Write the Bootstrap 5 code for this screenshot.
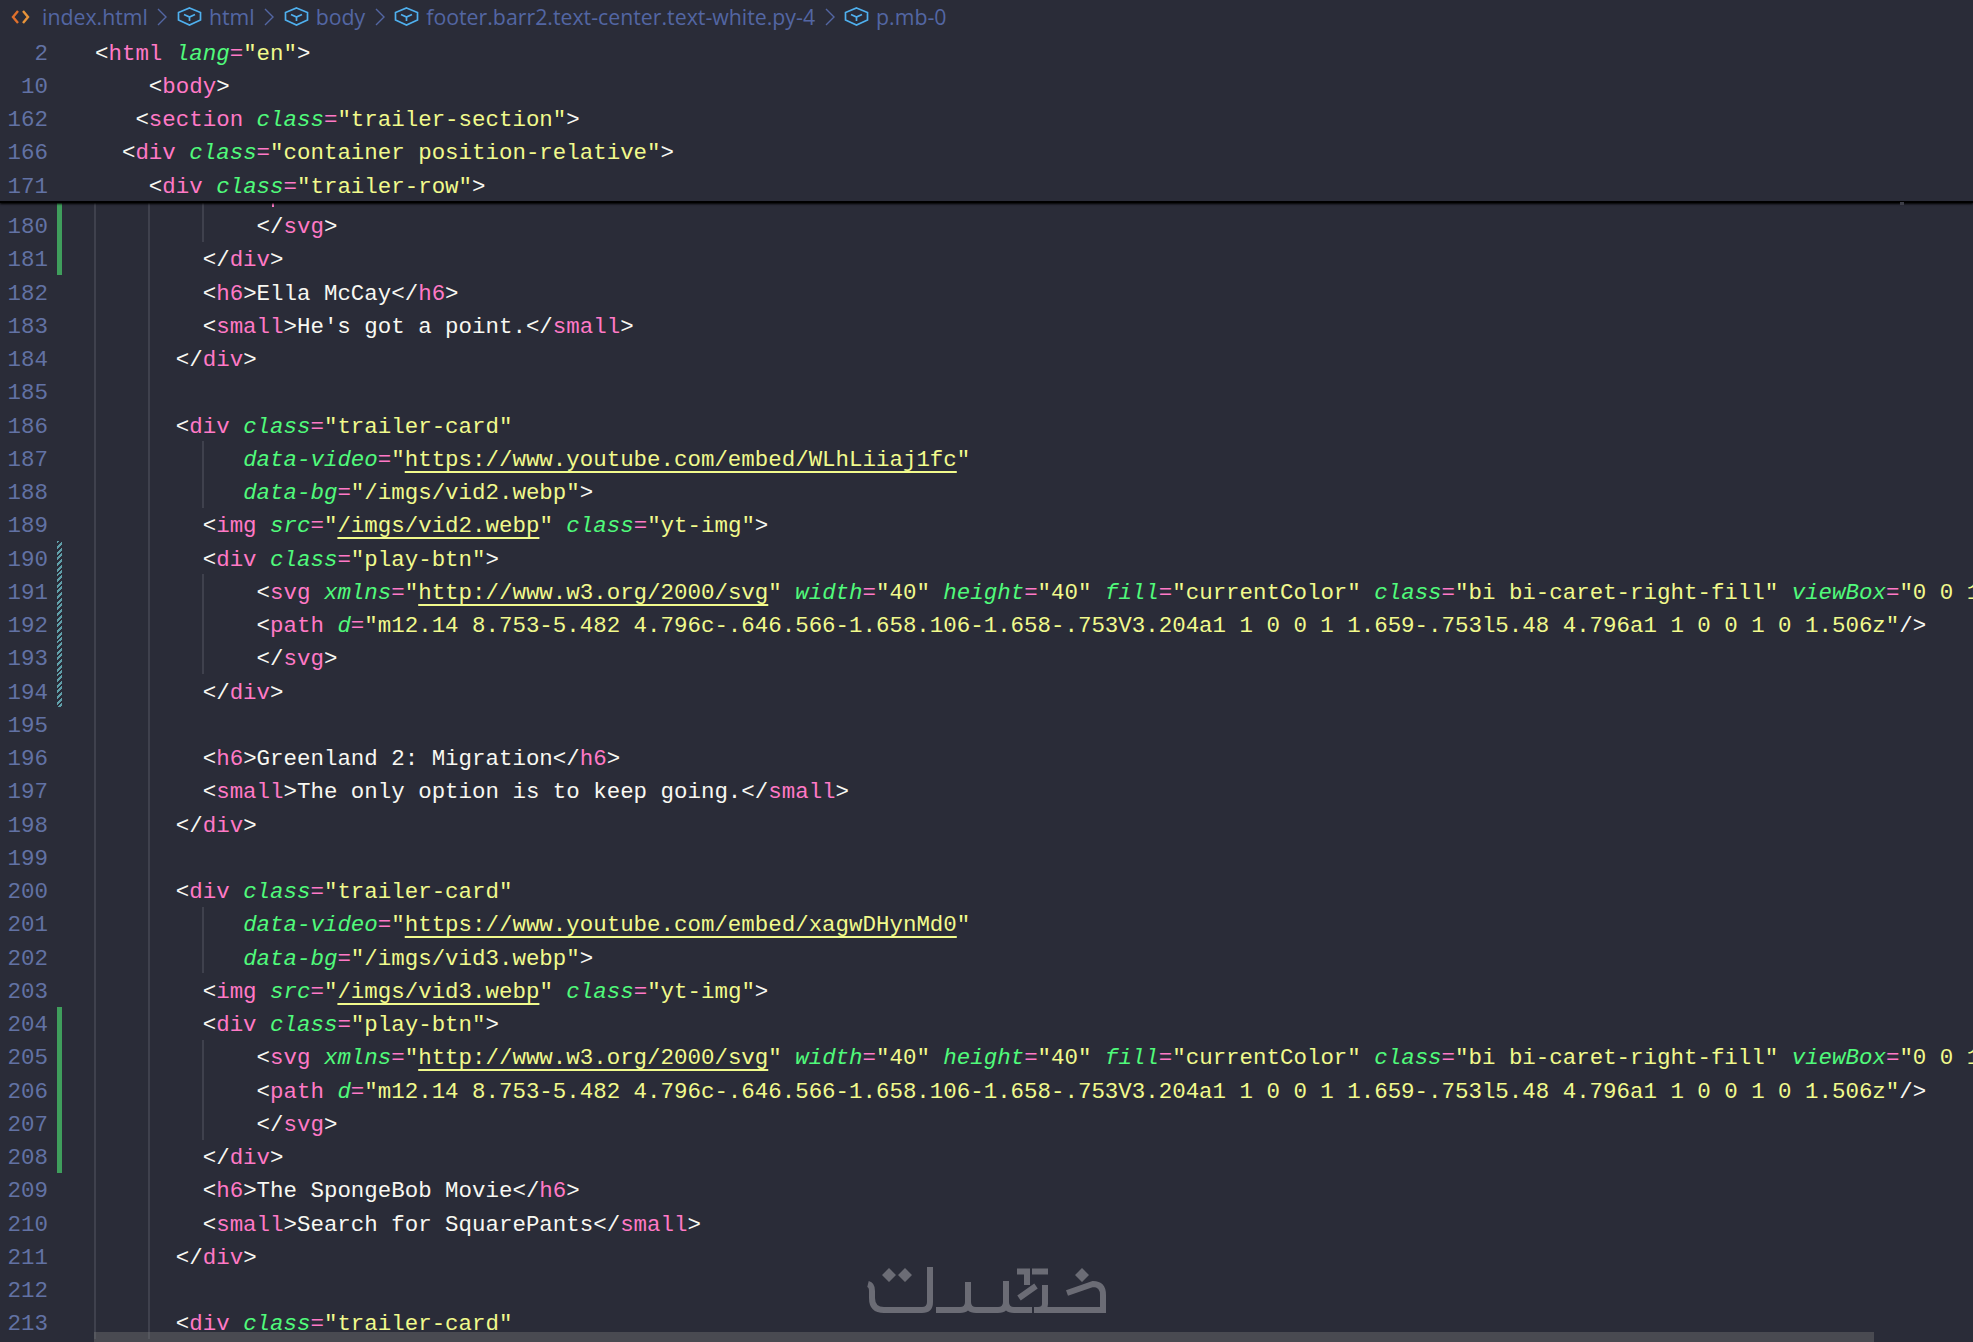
<!doctype html>
<html lang="en">
<head>
<meta charset="utf-8">
<title>index.html</title>
<link href="https://cdn.jsdelivr.net/npm/bootstrap@5.3.0/dist/css/bootstrap.min.css" rel="stylesheet">
<style>
html,body{height:100%;overflow:hidden;background:#2a2c38}
.ide{height:1342px;overflow:hidden;position:relative;background:#2a2c38}
.crumbs{height:35px;padding:0 0 2px 11px;font:21.3px "Open Sans",sans-serif;color:#5366a3;white-space:nowrap}
.crumbs svg{flex:none}
.fileic{margin-right:12px}
.sep{margin:0 9.5px}
.hex{margin-right:7px}
.ln{height:33.25px;font:22.44px/33.25px "Liberation Mono",monospace;white-space:pre;color:#f8f8f2;position:relative}
.num{width:48px;flex:none;text-align:right;color:#6272a4;padding-top:2.5px}
.gutter{width:46px;flex:none;position:relative}
.gutter i{position:absolute;left:9px;top:0;bottom:0;width:5px}
.add{background:#3f9e5c}
.mod{background:repeating-linear-gradient(135deg,#5f9ea8 0 2px,#2a2c38 2px 4px)}
.src{position:relative;padding:2.5px 0 0 1px}
.guide{position:absolute;top:0;bottom:0;width:1.5px;background:#3f414d}
.g1{left:0}.g2{left:54px}.g3{left:108px}
.tick{position:absolute;left:178px;bottom:2px;width:2px;height:4px;background:#ff79c6}
.tg{color:#ff79c6}.at{color:#50fa7b;font-style:italic}.st{color:#f1fa8c}
.ul{color:#f1fa8c;text-decoration:underline;text-underline-offset:5px;text-decoration-thickness:2px}
.sticky-lines{position:relative;z-index:2;background:#2a2c38;box-shadow:0 2px 0 #000,0 3px 2px #000;height:166px}
.speck{position:absolute;left:1900px;top:167px;width:4px;height:3px;background:#3c3d47}
.body-lines{margin-top:-25.75px}
.wm{position:absolute;left:860px;top:1260px;z-index:3}
.bar{position:absolute;left:94px;right:99px;bottom:0;height:10px;background:rgba(121,121,121,.4);z-index:4}
</style>
</head>
<body>
<div class="ide">
<div class="crumbs d-flex align-items-center">
<svg class="fileic" width="19" height="18" viewBox="0 0 19 18" fill="none" stroke-width="2.4"><path d="M7 3 2 9l5 6" stroke="#e0702c"/><path d="M12 3l5 6-5 6" stroke="#e8943a"/></svg>
<span>index.html</span>
<svg class="sep" width="10" height="18" viewBox="0 0 10 18" fill="none" stroke="#5366a3" stroke-width="1.4"><path d="M1 1l8 8-8 8"/></svg>
<svg class="hex" width="25" height="19" viewBox="0 0 25 19" fill="none" stroke="#4fb0ee" stroke-width="1.7"><path d="M12.500 1l11 4.500V13l-11 5-11-5V5.500z"/><path d="M7 7.500l5.500 2.500L18 7.500M12.500 10v4"/></svg>
<span>html</span>
<svg class="sep" width="10" height="18" viewBox="0 0 10 18" fill="none" stroke="#5366a3" stroke-width="1.4"><path d="M1 1l8 8-8 8"/></svg>
<svg class="hex" width="25" height="19" viewBox="0 0 25 19" fill="none" stroke="#4fb0ee" stroke-width="1.7"><path d="M12.500 1l11 4.500V13l-11 5-11-5V5.500z"/><path d="M7 7.500l5.500 2.500L18 7.500M12.500 10v4"/></svg>
<span>body</span>
<svg class="sep" width="10" height="18" viewBox="0 0 10 18" fill="none" stroke="#5366a3" stroke-width="1.4"><path d="M1 1l8 8-8 8"/></svg>
<svg class="hex" width="25" height="19" viewBox="0 0 25 19" fill="none" stroke="#4fb0ee" stroke-width="1.7"><path d="M12.500 1l11 4.500V13l-11 5-11-5V5.500z"/><path d="M7 7.500l5.500 2.500L18 7.500M12.500 10v4"/></svg>
<span>footer.barr2.text-center.text-white.py-4</span>
<svg class="sep" width="10" height="18" viewBox="0 0 10 18" fill="none" stroke="#5366a3" stroke-width="1.4"><path d="M1 1l8 8-8 8"/></svg>
<svg class="hex" width="25" height="19" viewBox="0 0 25 19" fill="none" stroke="#4fb0ee" stroke-width="1.7"><path d="M12.500 1l11 4.500V13l-11 5-11-5V5.500z"/><path d="M7 7.500l5.500 2.500L18 7.500M12.500 10v4"/></svg>
<span>p.mb-0</span>
</div>
<div class="sticky-lines" id="st"><div class="speck"></div></div>
<div class="body-lines" id="bd"></div>
<svg class="wm" width="250" height="60" viewBox="0 0 250 60" fill="none" stroke="#6b6c75" stroke-width="6" role="img" aria-label="خمسات">
<path d="M8 24Q12 25 12 31V38Q12 50 24 50H62Q70 50 70 42V7"/>
<path d="M76 50H100Q108 50 108 42V22"/>
<path d="M108 42Q108 50 116 50H138Q146 50 146 42V21"/>
<path d="M146 42Q146 50 154 50H172"/>
<path d="M157 11.500H170M167 11V25M176 26 159 38"/>
<path d="M172 11.500H188M185 25V44Q185 50 178 50H174"/>
<path d="M174 50H243V35Q243 24 233 24L207 33"/>
<path fill="#6b6c75" stroke="none" d="M29 8l7 7-7 7-7-7zM45 8l7 7-7 7-7-7zM222 8l7 7-7 7-7-7z"/>
</svg>
<div class="bar"></div>
</div>
<script>
function esc(s){return s.replace(/&/g,'&amp;').replace(/</g,'&lt;').replace(/>/g,'&gt;')}
function fmt(src){
  const re=/(<\/?)([a-zA-Z0-9]+)|([A-Za-z-]+)=("[^"]*")/g;
  let out='',pos=0,m;
  while((m=re.exec(src))){
    out+=esc(src.slice(pos,m.index));
    if(m[1]){out+=esc(m[1])+'<span class="tg">'+m[2]+'</span>'}
    else{
      const v=m[4],inner=v.slice(1,-1);
      const isUrl=/^(https?:|\/imgs)/.test(inner)&&m[3]!=='data-bg';
      out+='<span class="at">'+m[3]+'</span><span class="tg">=</span><span class="st">"'+(isUrl?'<span class="ul">'+inner+'</span>':inner)+'"</span>';
    }
    pos=re.lastIndex;
  }
  return out+esc(src.slice(pos));
}
const long='<svg xmlns="http://www.w3.org/2000/svg" width="40" height="40" fill="currentColor" class="bi bi-caret-right-fill" viewBox="0 0 16 16">';
const path='<path d="m12.14 8.753-5.482 4.796c-.646.566-1.658.106-1.658-.753V3.204a1 1 0 0 1 1.659-.753l5.48 4.796a1 1 0 0 1 0 1.506z"/>';
const sticky=[[2,'<html lang="en">'],[10,'    <body>'],[162,'   <section class="trailer-section">'],[166,'  <div class="container position-relative">'],[171,'    <div class="trailer-row">']];
const lines=[['','',3,'a'],[180,'            </svg>',3,'a'],[181,'        </div>',2,'a'],[182,'        <h6>Ella McCay</h6>',2],[183,'        <small>He\'s got a point.</small>',2],[184,'      </div>',2],[185,'',2],
[186,'      <div class="trailer-card"',2],[187,'           data-video="https://www.youtube.com/embed/WLhLiiaj1fc"',3],[188,'           data-bg="/imgs/vid2.webp">',3],[189,'        <img src="/imgs/vid2.webp" class="yt-img">',2],[190,'        <div class="play-btn">',2,'m'],[191,'            '+long,3,'m'],[192,'            '+path,3,'m'],[193,'            </svg>',3,'m'],[194,'        </div>',2,'m'],[195,'',2],
[196,'        <h6>Greenland 2: Migration</h6>',2],[197,'        <small>The only option is to keep going.</small>',2],[198,'      </div>',2],[199,'',2],
[200,'      <div class="trailer-card"',2],[201,'           data-video="https://www.youtube.com/embed/xagwDHynMd0"',3],[202,'           data-bg="/imgs/vid3.webp">',3],[203,'        <img src="/imgs/vid3.webp" class="yt-img">',2],[204,'        <div class="play-btn">',2,'a'],[205,'            '+long,3,'a'],[206,'            '+path,3,'a'],[207,'            </svg>',3,'a'],[208,'        </div>',2,'a'],[209,'        <h6>The SpongeBob Movie</h6>',2],[210,'        <small>Search for SquarePants</small>',2],[211,'      </div>',2],[212,'',2],[213,'      <div class="trailer-card"',2]];
function row(n,src,g,mark){
  const guides=[1,2,3].filter(i=>i<=g).map(i=>'<span class="guide g'+i+'"></span>').join('');
  const mk=mark==='a'?'<i class="add"></i>':mark==='m'?'<i class="mod"></i>':'';
  const tick=n===''?'<span class="tick"></span>':'';
  return '<div class="ln d-flex"><span class="num">'+n+'</span><span class="gutter">'+mk+'</span><span class="src flex-grow-1">'+guides+tick+fmt(src)+'</span></div>';
}
document.getElementById('st').insertAdjacentHTML('afterbegin',sticky.map(l=>row(l[0],l[1],0)).join(''));
document.getElementById('bd').innerHTML=lines.map(l=>row(l[0],l[1],l[2],l[3])).join('');
</script>
</body>
</html>
